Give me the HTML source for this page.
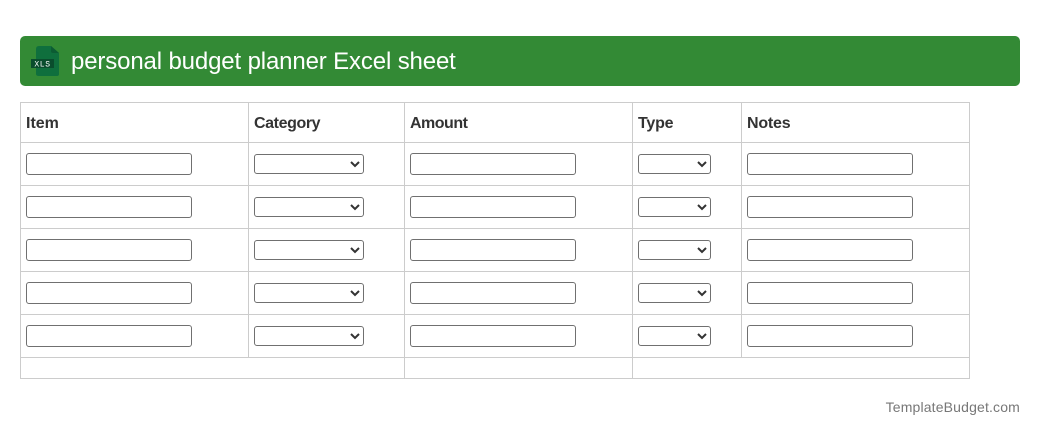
<!DOCTYPE html>
<html>
<head>
<meta charset="utf-8">
<style>
html,body{margin:0;padding:0;background:#fff;width:1040px;height:436px;overflow:hidden;font-family:"Liberation Sans",Arial,sans-serif}
.a{position:absolute}
.hd{left:20px;top:36px;width:1000px;height:50px;background:#338a35;border-radius:5px}
.ti{left:71px;top:47px;font-size:24px;line-height:30px;color:#fff;white-space:nowrap;letter-spacing:-.14px}
.h{position:absolute;left:20px;width:950px;height:1px;background:#ccc}
.v{position:absolute;width:1px;background:#ccc}
.th{position:absolute;top:114px;font-size:16px;line-height:20px;font-weight:bold;color:#333;white-space:nowrap;letter-spacing:-.4px}
input,select{position:absolute;box-sizing:border-box;margin:0;background:#fff;border:1px solid #707070;border-radius:3px;padding:0 2px;font-size:13px;color:#333;font-family:"Liberation Sans",Arial,sans-serif}
input{width:166px;height:22px}
select{height:20px}
.f{right:20px;top:398px;font-size:14px;line-height:18px;color:#777;white-space:nowrap;letter-spacing:.16px}
</style>
</head>
<body>
<div class="a hd"></div>
<svg class="a" style="left:30px;top:44px" width="32" height="34" viewBox="0 0 32 34">
<path d="M9 2H21L29 9V30Q29 32 27 32H9Q6 32 6 30V5Q6 2 9 2Z" fill="#0f6f3d"/>
<path d="M21 2L29 9H23Q21 9 21 7Z" fill="#0c5c33"/>
<rect x="1" y="15" width="23" height="9" fill="#0a4d2d"/>
<text x="12.5" y="22.5" font-family="Liberation Mono,monospace" font-size="8" letter-spacing=".6" fill="#fff" text-anchor="middle">XLS</text>
</svg>
<div class="a ti">personal budget planner Excel sheet</div>

<div class="h" style="top:102px"></div>
<div class="h" style="top:142px"></div>
<div class="h" style="top:185px"></div>
<div class="h" style="top:228px"></div>
<div class="h" style="top:271px"></div>
<div class="h" style="top:314px"></div>
<div class="h" style="top:357px"></div>
<div class="h" style="top:378px"></div>
<div class="v" style="left:20px;top:102px;height:277px"></div>
<div class="v" style="left:248px;top:102px;height:256px"></div>
<div class="v" style="left:404px;top:102px;height:277px"></div>
<div class="v" style="left:632px;top:102px;height:277px"></div>
<div class="v" style="left:741px;top:102px;height:256px"></div>
<div class="v" style="left:969px;top:102px;height:277px"></div>

<div class="th" style="left:26px;letter-spacing:0">Item</div>
<div class="th" style="left:254px">Category</div>
<div class="th" style="left:410px;letter-spacing:-.5px">Amount</div>
<div class="th" style="left:638px;letter-spacing:-.2px">Type</div>
<div class="th" style="left:747px;letter-spacing:-.2px">Notes</div>

<input style="left:26px;top:153px"><select style="left:254px;top:154px;width:110px"></select><input style="left:410px;top:153px"><select style="left:638px;top:154px;width:73px"></select><input style="left:747px;top:153px">
<input style="left:26px;top:196px"><select style="left:254px;top:197px;width:110px"></select><input style="left:410px;top:196px"><select style="left:638px;top:197px;width:73px"></select><input style="left:747px;top:196px">
<input style="left:26px;top:239px"><select style="left:254px;top:240px;width:110px"></select><input style="left:410px;top:239px"><select style="left:638px;top:240px;width:73px"></select><input style="left:747px;top:239px">
<input style="left:26px;top:282px"><select style="left:254px;top:283px;width:110px"></select><input style="left:410px;top:282px"><select style="left:638px;top:283px;width:73px"></select><input style="left:747px;top:282px">
<input style="left:26px;top:325px"><select style="left:254px;top:326px;width:110px"></select><input style="left:410px;top:325px"><select style="left:638px;top:326px;width:73px"></select><input style="left:747px;top:325px">

<div class="a f">TemplateBudget.com</div>
</body>
</html>
